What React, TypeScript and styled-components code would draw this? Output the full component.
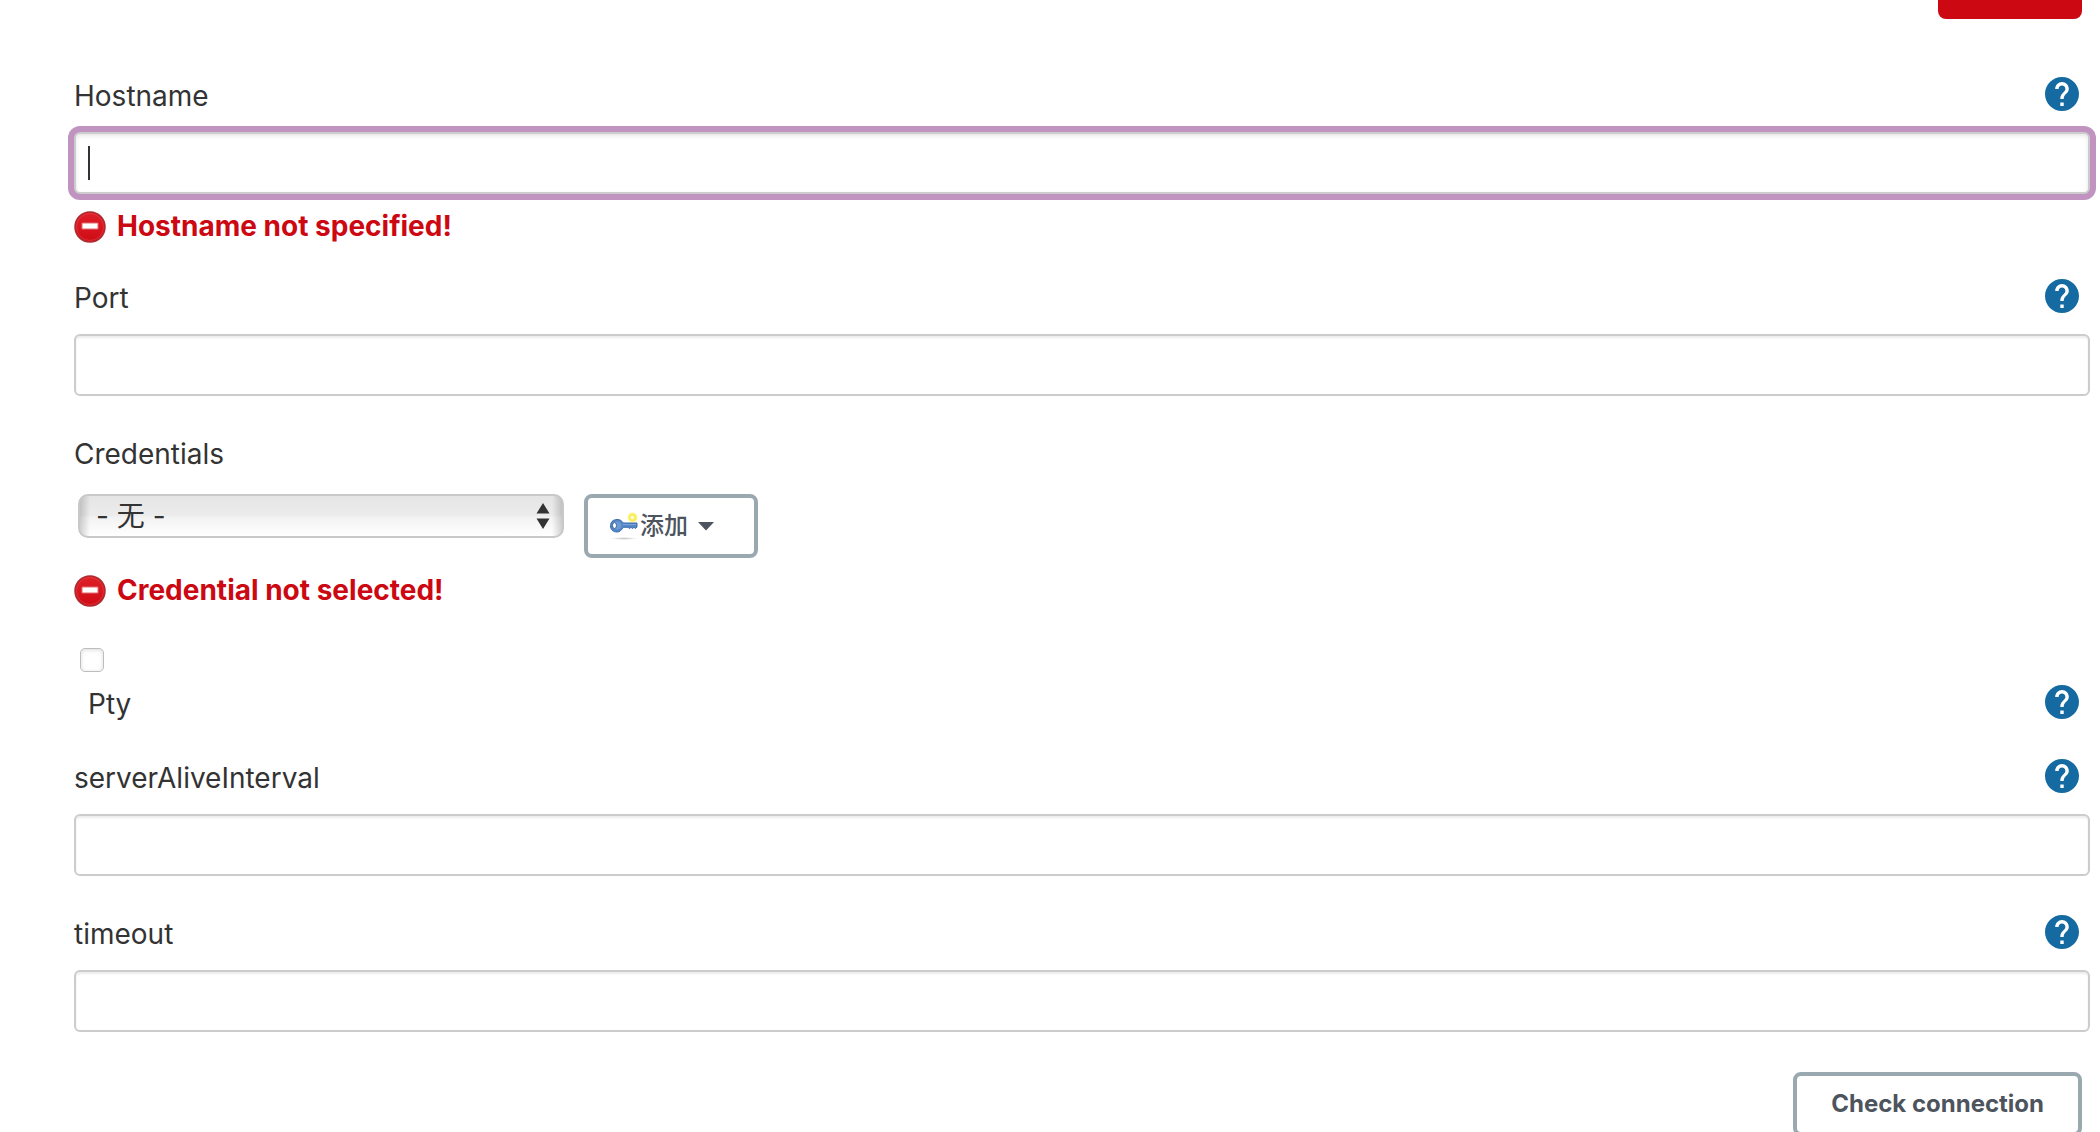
import React, { useState } from "react";
import styled, { createGlobalStyle, css } from "styled-components";

const GlobalStyle = createGlobalStyle`
  *, *::before, *::after { box-sizing: border-box; }
  body {
    margin: 0;
    background: #fff;
    color: #333;
    font-family: Inter, "Noto Sans CJK SC", "Liberation Sans", sans-serif;
    font-size: 28px;
  }
`;

const Page = styled.main`
  height: 100vh;
  overflow: hidden;
  padding: 0 10px 0 74px;
`;

const Actions = styled.div`
  display: flex;
  justify-content: flex-end;
  padding-right: 8px;
`;

const DeleteButton = styled.button`
  width: 144px;
  height: 19px;
  border: 0;
  border-radius: 0 0 8px 8px;
  background: #cc0813;
`;

const Form = styled.form`
  margin-top: 58px;
`;

const Field = styled.div<{ $gap: number }>`
  margin-bottom: ${(p) => p.$gap}px;
`;

const Head = styled.div<{ $gap?: number; $indent?: number }>`
  display: flex;
  justify-content: space-between;
  align-items: flex-start;
  margin-bottom: ${(p) => p.$gap ?? 17}px;
  padding: 0 11px 0 ${(p) => p.$indent ?? 0}px;
`;

const Label = styled.label`
  line-height: 38px;
`;

const HelpLink = styled.a`
  display: block;
  width: 34px;
  height: 34px;
  color: #156ba1;
  svg { display: block; }
`;

const InputWrap = styled.div`
  position: relative;
`;

const TextInput = styled.input<{ $active?: boolean }>`
  display: block;
  width: 100%;
  height: 62px;
  padding: 0 14px;
  border: 2px solid #ccc;
  border-radius: 6px;
  background: #fff;
  box-shadow: inset 0 2px 2px rgba(0, 0, 0, 0.08);
  color: #333;
  font: inherit;
  outline: none;
  ${(p) =>
    p.$active &&
    css`
      box-shadow: inset 0 2px 4px rgba(0, 0, 0, 0.1), 0 0 0 6px #c093c1;
      caret-color: transparent;
    `}
`;

const Caret = styled.span`
  position: absolute;
  left: 14px;
  top: 14px;
  width: 2px;
  height: 34px;
  background: #333;
  pointer-events: none;
`;

const ErrorRow = styled.div`
  display: flex;
  align-items: flex-start;
  gap: 11px;
  height: 32px;
  margin-top: 17px;
  color: #cc0813;
  font-weight: 700;
  line-height: 30px;
  svg { display: block; flex: none; }
`;

const CredentialRow = styled.div`
  display: flex;
  align-items: flex-start;
  gap: 20px;
  padding-left: 4px;
`;

const SelectWrap = styled.div`
  position: relative;
  width: 486px;
  svg {
    position: absolute;
    right: 14px;
    top: 9px;
    pointer-events: none;
  }
`;

const Select = styled.select`
  display: block;
  appearance: none;
  width: 100%;
  height: 44px;
  padding: 0 40px 0 16px;
  border: 2px solid #c8c8c8;
  border-radius: 10px;
  background:
    linear-gradient(to right, rgba(0, 0, 0, 0.17), transparent 10px, transparent calc(100% - 10px), rgba(0, 0, 0, 0.17)),
    linear-gradient(#e5e5e5, #ececec 50%, #f2f2f2 52%, #fff);
  color: #333;
  font: inherit;
  line-height: 40px;
`;

const OutlineButton = styled.button`
  display: flex;
  align-items: center;
  height: 64px;
  border: 4px solid #9aa8b0;
  border-radius: 8px;
  background: #fff;
  color: #4d545d;
  font: inherit;
  font-size: 24px;
  line-height: 32px;
`;

const AddButton = styled(OutlineButton)`
  width: 174px;
  padding: 0 0 0 21px;
  font-weight: 500;
  svg:last-child { margin-left: 10px; }
`;

const CheckButton = styled(OutlineButton)`
  padding: 0 34px;
  font-weight: 700;
`;

const Checkbox = styled.input`
  display: block;
  appearance: none;
  width: 24px;
  height: 24px;
  margin: 0 0 13px 6px;
  border: 1px solid #bdbdbd;
  border-radius: 5px;
  background: #fff;
  box-shadow: inset 0 1px 4px rgba(0, 0, 0, 0.14);
`;

const Footer = styled.div`
  display: flex;
  justify-content: flex-end;
  margin-top: 40px;
  padding-right: 8px;
`;

function Help({ topic }: { topic: string }) {
  return (
    <HelpLink href="#help" aria-label={`Help for feature: ${topic}`}>
      <svg width="34" height="34" viewBox="2 2 20 20" aria-hidden="true">
        <path
          fill="currentColor"
          d="M12 2C6.48 2 2 6.48 2 12s4.48 10 10 10 10-4.48 10-10S17.52 2 12 2zm1 17h-2v-2h2v2zm2.07-7.75l-.9.92C13.45 12.9 13 13.5 13 15h-2v-.5c0-1.1.45-2.1 1.17-2.83l1.24-1.26c.37-.36.59-.86.59-1.41 0-1.1-.9-2-2-2s-2 .9-2 2H8c0-2.21 1.79-4 4-4s4 1.79 4 4c0 .88-.36 1.68-.93 2.25z"
        />
      </svg>
    </HelpLink>
  );
}

function ErrorMessage({ id, children }: { id: string; children: string }) {
  return (
    <ErrorRow id={id}>
      <svg width="32" height="32" viewBox="0 0 32 32" aria-hidden="true">
        <defs>
          <linearGradient id={`${id}-fill`} x1="0" y1="0" x2="0" y2="1">
            <stop offset="0" stopColor="#df2029" />
            <stop offset="1" stopColor="#cf0c16" />
          </linearGradient>
        </defs>
        <circle cx="16" cy="16" r="15" fill={`url(#${id}-fill)`} stroke="#ad2a30" strokeWidth="1.500" />
        <circle cx="16" cy="16" r="13.500" fill="none" stroke="#ea4a4f" strokeOpacity="0.5" />
        <rect x="7.500" y="11.500" width="17" height="7" rx="1" fill="#e36a6e" />
        <rect x="8.500" y="12.500" width="15" height="5" fill="#fff" />
      </svg>
      <span>{children}</span>
    </ErrorRow>
  );
}

function KeyIcon() {
  return (
    <svg width="31" height="32" viewBox="0 0 31 32" aria-hidden="true">
      <defs>
        <radialGradient id="key-shadow">
          <stop offset="0" stopColor="#000" stopOpacity="0.22" />
          <stop offset="1" stopColor="#000" stopOpacity="0" />
        </radialGradient>
      </defs>
      <ellipse cx="15" cy="28.500" rx="14" ry="1.500" fill="url(#key-shadow)" />
      <circle cx="23.500" cy="7.500" r="5" fill="#fff68a" />
      <circle cx="23.500" cy="7.500" r="2.800" fill="#fffbd0" stroke="#f7ea4c" strokeWidth="1.500" />
      <path
        d="M8 9.500c3 0 5 1.200 6 3.500h14v4l-1.500 1.500-1.500-1.200-1.500 1.200-1.500-1.200-1.500 1.200-1.500-1.200H14c-1.300 3-3.300 4.700-6 4.700-4.200 0-6.500-2.800-6.500-6.200S3.800 9.500 8 9.500z"
        fill="#5486c6"
        stroke="#3e6dad"
      />
      <path d="M14 14.500h13" stroke="#7ba5da" />
      <ellipse cx="8" cy="15.500" rx="4.500" ry="4" fill="#6b9ad4" />
      <ellipse cx="5.500" cy="15.500" rx="2" ry="3" fill="#fff" stroke="#3a659f" />
    </svg>
  );
}

function TextField(props: { name: string; gap?: number; error?: string; focused?: boolean }) {
  const { name, gap = 39, error, focused } = props;
  const [value, setValue] = useState("");
  return (
    <Field $gap={gap}>
      <Head>
        <Label htmlFor={name}>{name}</Label>
        <Help topic={name} />
      </Head>
      <InputWrap>
        <TextInput
          id={name}
          type="text"
          $active={focused}
          autoFocus={focused}
          value={value}
          onChange={(e) => setValue(e.target.value)}
          aria-describedby={error ? `${name}-error` : undefined}
        />
        {focused && !value && <Caret />}
      </InputWrap>
      {error && <ErrorMessage id={`${name}-error`}>{error}</ErrorMessage>}
    </Field>
  );
}

export default function App() {
  return (
    <>
      <GlobalStyle />
      <Page>
        <Actions>
          <DeleteButton type="button" aria-label="Delete" />
        </Actions>
        <Form onSubmit={(e) => e.preventDefault()}>
          <TextField name="Hostname" gap={36} error="Hostname not specified!" focused />
          <TextField name="Port" />
          <Field $gap={41}>
            <Head $gap={21}>
              <Label htmlFor="credentials">Credentials</Label>
            </Head>
            <CredentialRow>
              <SelectWrap>
                <Select id="credentials" aria-describedby="credentials-error">
                  <option>- 无 -</option>
                </Select>
                <svg width="14" height="26" viewBox="0 0 14 26" fill="#333" aria-hidden="true">
                  <path d="M7 0l6.500 10.500H.5zM7 26L.5 15.500h13z" />
                </svg>
              </SelectWrap>
              <AddButton type="button">
                <KeyIcon />
                <span>添加</span>
                <svg width="16" height="9" viewBox="0 0 16 9" fill="#4d545d" aria-hidden="true">
                  <path d="M0 0h16L8 8.500z" />
                </svg>
              </AddButton>
            </CredentialRow>
            <ErrorMessage id="credentials-error">Credential not selected!</ErrorMessage>
          </Field>
          <Field $gap={36}>
            <Checkbox id="pty" type="checkbox" />
            <Head $gap={0} $indent={14}>
              <Label htmlFor="pty">Pty</Label>
              <Help topic="Pty" />
            </Head>
          </Field>
          <TextField name="serverAliveInterval" />
          <TextField name="timeout" gap={40} />
          <Footer>
            <CheckButton type="button">Check connection</CheckButton>
          </Footer>
        </Form>
      </Page>
    </>
  );
}
